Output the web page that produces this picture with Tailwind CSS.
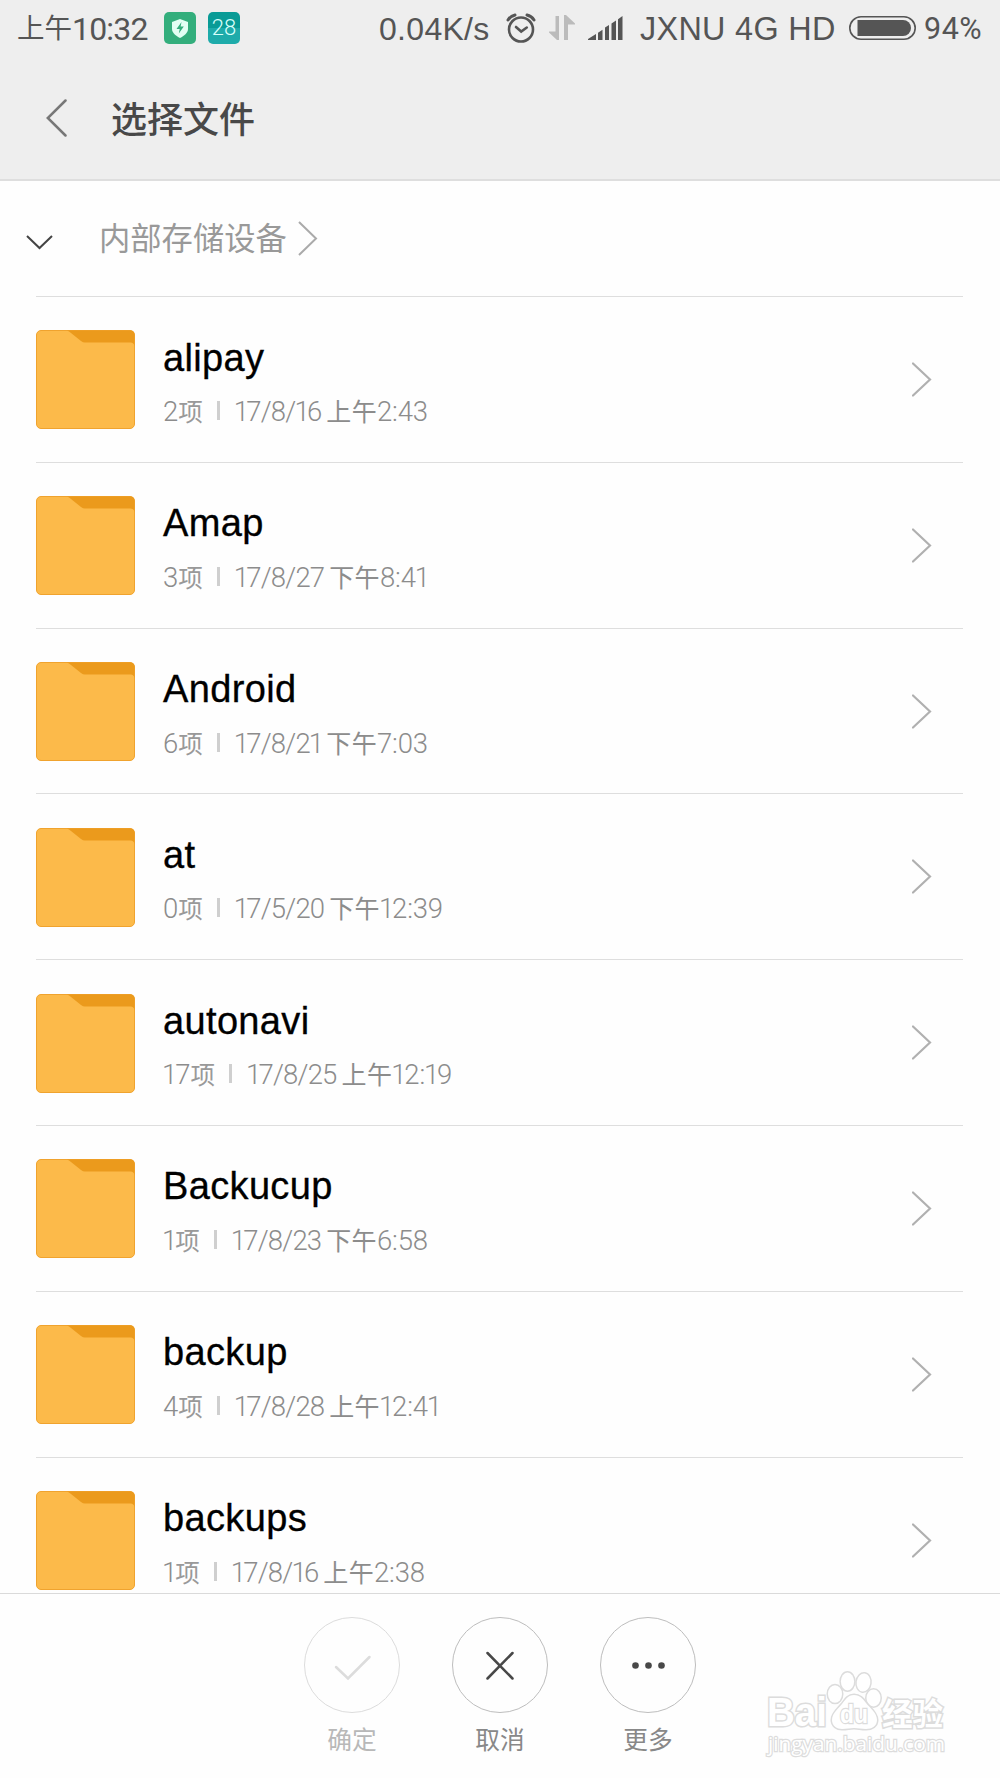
<!DOCTYPE html>
<html lang="zh-CN">

<head>
    <meta charset="UTF-8">
    <meta name="viewport" content="width=device-width, initial-scale=1">
    <title>选择文件</title>
    <script src="https://cdn.jsdelivr.net/npm/@tailwindcss/browser@4"></script>
</head>

<body class="bg-[#fefefe] font-['Roboto','Noto_Sans_CJK_SC',sans-serif]">
    <div class="w-[1000px] h-[1778px] flex flex-col overflow-hidden">

        <header class="h-[181px] shrink-0 bg-[#eeeeee] border-b-2 border-[#dedede] text-[#555]">
            <!-- Status bar -->
            <div class="h-14 flex items-center pl-[17px] pr-[17px] whitespace-nowrap">
                <div class="w-[147px] flex items-center leading-[56px]">
                    <span class="text-[27.5px] pt-[2px]">上午</span>
                    <span class="text-[32px] tracking-[-0.8px] pt-px">10:32</span>
                </div>
                <svg class="w-8 h-8" viewBox="0 0 32 32">
                    <rect width="32" height="32" rx="5" fill="#33ae7c" />
                    <path d="M16 7l8 3v7c0 4-4 7-8 9-4-2-8-5-8-9v-7z" fill="#e2fff3" />
                    <path d="M17.5 10l-5 7h3.2l-.9 4.5 5-7h-3.2z" fill="#33ae7c" />
                </svg>
                <div class="w-8 h-8 ml-3 rounded-[5px] bg-linear-to-b from-[#099b96] from-50% to-[#1eabaa] to-50% text-[#d8fffa] text-[22px] font-light leading-8 text-center">28</div>
                <span class="w-[110px] ml-[139px] pt-[2px] text-[32px] tracking-[0.3px] font-['Liberation_Sans',sans-serif]">0.04K/s</span>
                <svg class="w-[30px] h-[30px] ml-[17px]" viewBox="0 0 30 30" fill="none" stroke="#555" stroke-width="2.6" stroke-linecap="round">
                    <circle cx="15" cy="16.5" r="12" />
                    <path d="M10 14l5.2 4.5 5.6-4" />
                    <path d="M2 7q2.500-4 7-5M28 7q-2.500-4-7-5" stroke-width="3" />
                </svg>
                <svg class="w-[26px] h-[26px] ml-[13px]" viewBox="0 0 26 26" fill="#bbb">
                    <path d="M6.500 1H10v24H8L0 17.500V16.500h6.500zM15 0h2l9 8.500v1h-7v15.500h-4z" />
                </svg>
                <svg class="w-[35px] h-6 ml-[13px]" viewBox="0 0 35 24" fill="#555">
                    <path d="M0 24v-1l8-5v6zM10 16.700l4.500-3V24H10zM17 11.500l4-2.500v15h-4zM23.500 7.500l4.500-3V24h-4.500zM30 3.200L34.500 0v24H30z" />
                </svg>
                <span class="w-[194px] ml-[17px] pt-[3px] text-[32.4px] tracking-[0.3px] font-['Liberation_Sans',sans-serif]">JXNU 4G HD</span>
                <svg class="w-[67px] h-6 ml-[15px]" viewBox="0 0 67 24">
                    <rect x=".8" y=".8" width="65.400" height="22.400" rx="11.200" fill="none" stroke="#555" stroke-width="1.600" />
                    <path d="M8.500 4H54a8 8 0 010 16H8.500z" fill="#555" />
                </svg>
                <span class="ml-[8px] pt-[2px] text-[30.5px] tracking-[0.5px]">94%</span>
            </div>
            <!-- Title bar -->
            <div class="h-[124px] flex items-center pl-[46px]">
                <svg class="w-[22px] h-[38px]" viewBox="0 0 22 38" fill="none" stroke="#777" stroke-width="2.500" stroke-linecap="round">
                    <path d="M19.500 1.500L1.800 19l17.700 17.500" />
                </svg>
                <h1 class="ml-[43px] pt-[6px] text-[36px] leading-[50px] font-medium text-[#484848]">选择文件</h1>
            </div>
        </header>

        <!-- Breadcrumb -->
        <nav class="h-[115px] shrink-0 flex items-center pl-[26px] text-[#999]">
            <svg class="w-[27px] h-[15px] mt-[7px]" viewBox="0 0 27 15" fill="none" stroke="#444" stroke-width="2">
                <path d="M1 1l12.500 12L26 1" />
            </svg>
            <span class="ml-[46px] pt-[4px] text-[31.3px]">内部存储设备</span>
            <svg class="w-5 h-[35px] ml-[11px]" viewBox="0 0 20 35" fill="none" stroke="#aaa" stroke-width="2">
                <path d="M1 1l17 16.500L1 34" />
            </svg>
        </nav>

        <!-- Folder list -->
        <main id="folders" class="h-[1297px] shrink-0 overflow-hidden pl-9 pr-[37px]"></main>

        <!-- Action bar -->
        <footer class="relative h-[185px] shrink-0 border-t border-[#dadada] flex justify-center gap-[52px] pt-[23px] text-[24.7px] leading-9 text-[#888]">
            <div class="w-24 flex flex-col items-center text-[#b8b8b8]">
                <svg class="w-24 h-24" viewBox="0 0 96 96" fill="none" stroke="#dcdcdc">
                    <circle cx="48" cy="48" r="47.500" />
                    <path d="M32 50l12 11.500L65.500 40" stroke-width="2.500" stroke-linecap="round" />
                </svg>
                <span class="mt-[10px]">确定</span>
            </div>
            <div class="w-24 flex flex-col items-center">
                <svg class="w-24 h-24" viewBox="0 0 96 96" fill="none" stroke="#bdbdbd">
                    <circle cx="48" cy="48" r="47.500" />
                    <path d="M35.500 36l25 25.500M60.500 36l-25 25.500" stroke="#484848" stroke-width="2.500" stroke-linecap="round" />
                </svg>
                <span class="mt-[10px]">取消</span>
            </div>
            <div class="w-24 flex flex-col items-center">
                <svg class="w-24 h-24" viewBox="0 0 96 96" fill="#484848">
                    <circle cx="48" cy="48" r="47.500" fill="none" stroke="#bdbdbd" />
                    <circle cx="35.500" cy="48.500" r="3.300" />
                    <circle cx="48.500" cy="48.500" r="3.300" />
                    <circle cx="61.500" cy="48.500" r="3.300" />
                </svg>
                <span class="mt-[10px]">更多</span>
            </div>
            <!-- Watermark -->
            <svg class="absolute left-[760px] top-[71px] w-[192px] h-[96px]" viewBox="0 0 192 96" fill="#fff" stroke="#dcdcdc" stroke-width="1.800" paint-order="stroke">
                <g font-family="Liberation Sans, sans-serif" font-weight="bold">
                    <text x="7" y="61" font-size="40" stroke-width="3" textLength="60" lengthAdjust="spacingAndGlyphs">Bai</text>
                    <g stroke-width="3">
                        <ellipse cx="75" cy="29" rx="7" ry="8.800" />
                        <ellipse cx="87.500" cy="16.500" rx="6.600" ry="9" />
                        <ellipse cx="103.500" cy="17.500" rx="6.800" ry="9" transform="rotate(8 103.500 17.500)" />
                        <ellipse cx="113.500" cy="33" rx="7" ry="8.500" />
                        <path d="M94 30c-6 0-9 5-12 9s-10 9-10 16c0 6 5 9 10 9 5 0 8-1 12-1s7 1 12 1c6 0 11-3 11-9 0-7-7-12-11-17-3-4-6-8-12-8z" />
                    </g>
                    <text x="80" y="58" font-size="25" stroke-width="2.400" textLength="28" lengthAdjust="spacingAndGlyphs">du</text>
                </g>
                <text x="122" y="60" font-size="31" font-weight="bold" stroke-width="3" font-family="Noto Sans CJK SC, sans-serif" textLength="61" lengthAdjust="spacingAndGlyphs">经验</text>
                <text x="8" y="86" font-size="20.500" stroke-width="2.400" font-family="Open Sans, sans-serif" textLength="177" lengthAdjust="spacingAndGlyphs">jingyan.baidu.com</text>
            </svg>
        </footer>
    </div>

    <script>
        const folders = [
            { name: 'alipay', count: '2', date: '17/8/16 上午2:43' },
            { name: 'Amap', count: '3', date: '17/8/27 下午8:41' },
            { name: 'Android', count: '6', date: '17/8/21 下午7:03' },
            { name: 'at', count: '0', date: '17/5/20 下午12:39' },
            { name: 'autonavi', count: '17', date: '17/8/25 上午12:19' },
            { name: 'Backucup', count: '1', date: '17/8/23 下午6:58' },
            { name: 'backup', count: '4', date: '17/8/28 上午12:41' },
            { name: 'backups', count: '1', date: '17/8/16 上午2:38' }
        ];

        // Digit "1" is set narrower than the other figures
        const figures = text => text
            .replace(/1/g, '<span class="-ml-px -mr-[2px]">1</span>')
            .replace(/([上下]午)(.*)/, '<span class="text-[25px] tracking-[0.4px] font-normal">$1</span><span class="tracking-[-0.2px]">$2</span>');

        document.getElementById('folders').innerHTML = folders.map(f => `
      <div class="h-[165.8px] border-t border-[#dedede] flex items-start">
        <svg class="w-[99px] h-[99px] mt-[33.4px] shrink-0" viewBox="0 0 99 99">
          <rect x=".5" y=".5" width="98" height="98" rx="4.500" fill="#fcba4a" stroke="#f0a32e" />
          <path d="M31 .5h63.500a4 4 0 014 4V16q-.5-3.500-4-3.500H49q-2 0-4-1.500L35 3q-2-2-4-2.500z" fill="#eb9a1c" />
        </svg>
        <div class="ml-[28px] mt-[37.5px] flex-1">
          <h2 class="text-[38px] leading-[46px] tracking-[0.35px] text-black font-['Liberation_Sans',sans-serif] [-webkit-text-stroke:0.3px_black]">${f.name}</h2>
          <div class="mt-[14px] h-9 flex items-center whitespace-nowrap text-[27.5px] leading-9 font-light text-[#8c8c8c]">
            <span>${figures(f.count)}<span class="text-[24.5px] font-normal text-[#999]">项</span></span>
            <span class="w-[3px] h-[19px] ml-[14px] mr-[15px] mb-[4px] bg-[#cfcfcf]"></span>
            <span class="tracking-[-0.8px] [word-spacing:-1px]">${figures(f.date)}</span>
          </div>
        </div>
        <svg class="w-5 h-[35px] mt-[65px] mr-[31px]" viewBox="0 0 20 35" fill="none" stroke="#b0b0b0" stroke-width="2.200" stroke-linecap="round">
          <path d="M1 1.500l17 16-17 16" />
        </svg>
      </div>
    `).join('');
    </script>
</body>

</html>
